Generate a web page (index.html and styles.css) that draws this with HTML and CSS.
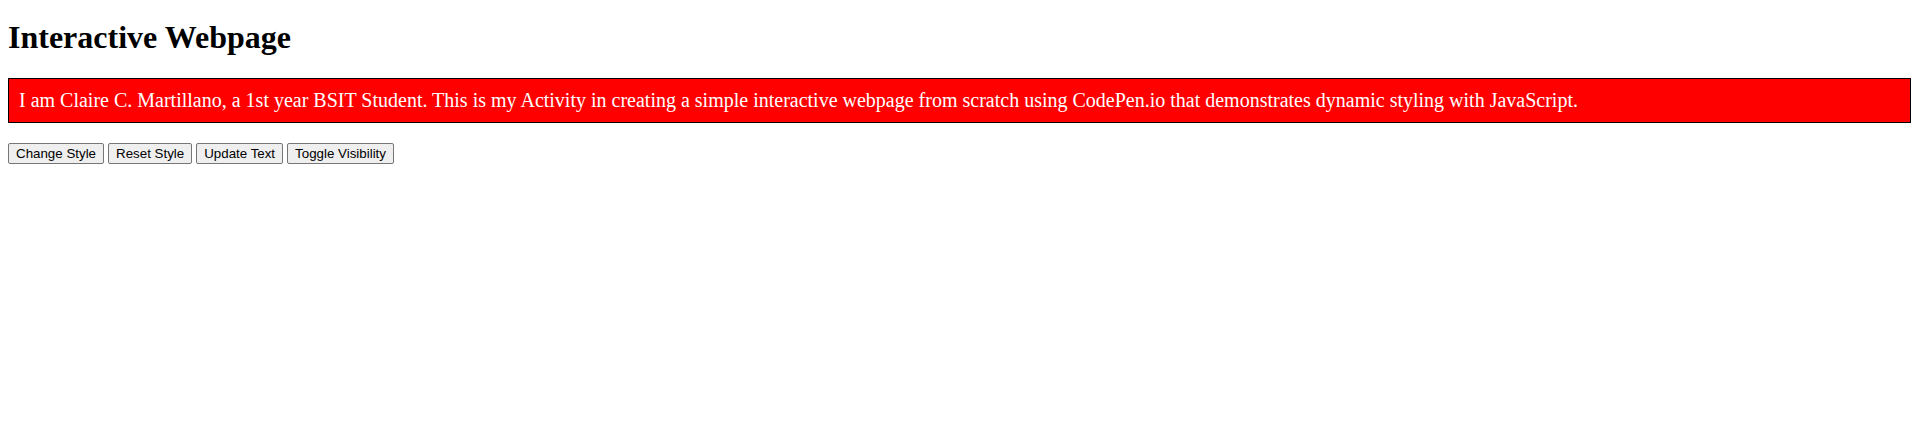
FILE: index.html
```html
<!DOCTYPE html>
<html>
<head>
<meta charset="utf-8">
<title>Interactive Webpage</title>
<link rel="stylesheet" href="styles.css">
</head>
<body class="page">
<h1 class="title">Interactive Webpage</h1>
<div class="content" id="content">I am Claire C. Martillano, a 1st year BSIT Student. This is my Activity in creating a simple interactive webpage from scratch using CodePen.io that demonstrates dynamic styling with JavaScript.</div>
<div class="controls">
<button class="btn">Change Style</button>
<button class="btn">Reset Style</button>
<button class="btn">Update Text</button>
<button class="btn">Toggle Visibility</button>
</div>
</body>
</html>
```
FILE: styles.css
```css
html, body {
  background: #ffffff;
}
.page {
  margin: 8px;
  font-family: "Liberation Serif", "Times New Roman", serif;
  color: #000;
}
.title {
  font-size: 32px;
  font-weight: bold;
  margin: 11px 0 22px;
  line-height: normal;
}
.content {
  background: #ff0000;
  color: #ffffff;
  border: 1px solid #000;
  padding: 10px;
  font-size: 20px;
  margin: 0 0 20px;
}
.controls {
  margin: 0;
}
.btn {
  font-family: "Liberation Sans", Arial, sans-serif;
  font-size: 13.333px;
  color: #000;
  background: #efefef;
  border: 1px solid #767676;
  border-radius: 2px;
  padding: 1px 7px;
  height: 21px;
  line-height: normal;
  margin: 0;
}
```
